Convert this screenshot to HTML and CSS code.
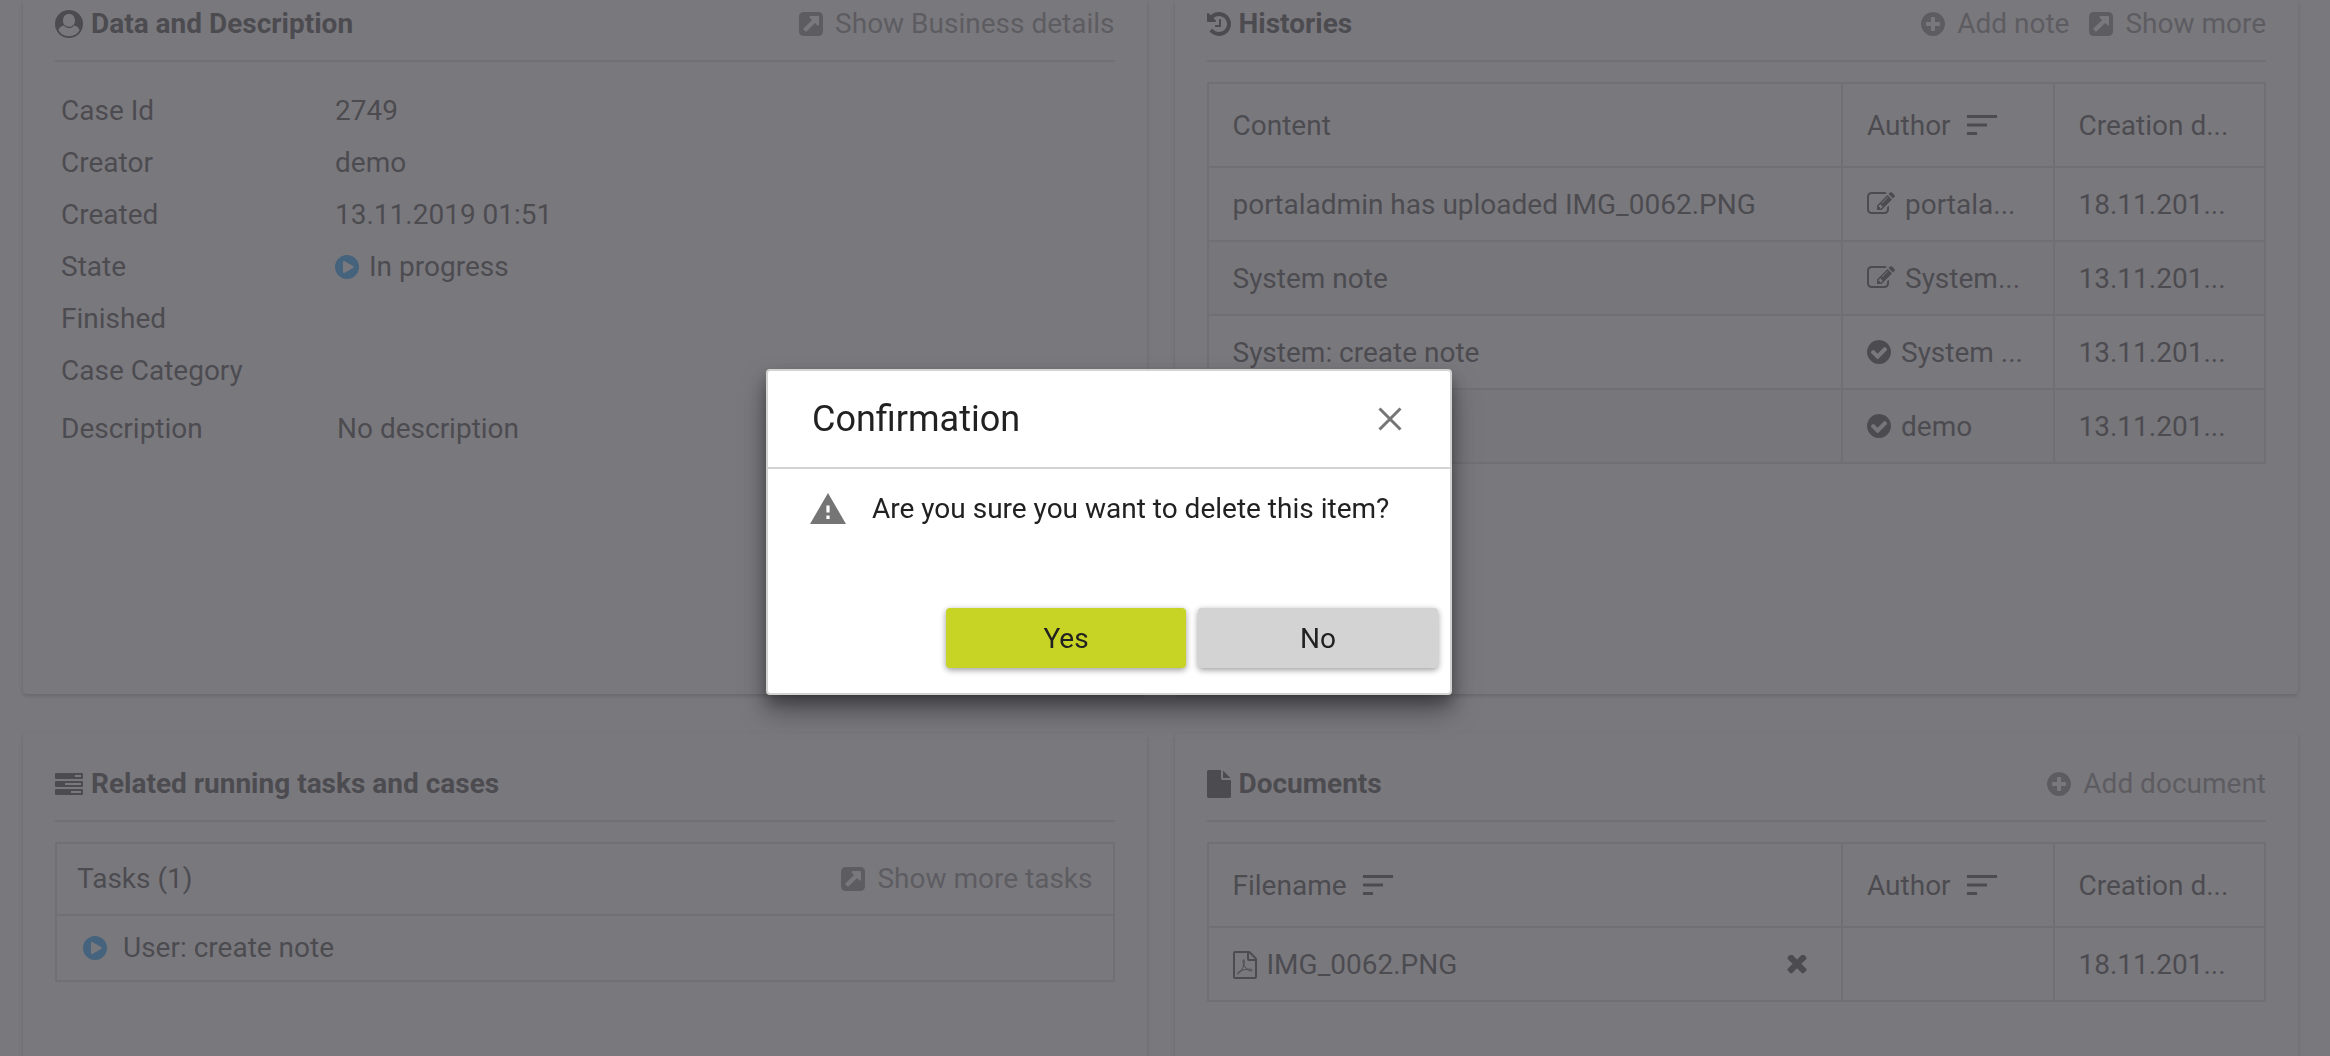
FILE: index.html
```html
<!DOCTYPE html>
<html lang="en">
<head>
<meta charset="utf-8">
<title>Case details</title>
<link rel="stylesheet" href="styles.css">
</head>
<body>
<svg class="sprite" aria-hidden="true">
  <symbol id="i-user" viewBox="0 0 28 28"><path fill-rule="evenodd" d="M14 0a14 14 0 1 0 0 28 14 14 0 0 0 0-28zm0 4c3.400 0 6 2.700 6 6.500 0 2-.700 3.600-1.700 4.800 3.700.5 5.600 2.600 6.200 5A12.300 12.300 0 0 1 14 26.300 12.300 12.300 0 0 1 3.500 20.300c.6-2.400 2.500-4.500 6.200-5C8.700 14.100 8 12.500 8 10.500 8 6.700 10.600 4 14 4z"/><path fill="none" stroke="currentColor" stroke-width="1.300" d="M9.500 15.300c1.200 1.500 2.700 2.200 4.500 2.200s3.300-.7 4.500-2.200"/></symbol>
  <symbol id="i-open" viewBox="128 0 1536 1792"><path d="M1408 928v-480q0-26-19-45t-45-19h-480q-42 0-59 39-17 41 14 70l144 144-534 534q-19 19-19 45t19 45l102 102q19 19 45 19t45-19l534-534 144 144q18 19 45 19 12 0 25-5 39-17 39-59zm256-512v960q0 119-84.500 203.500t-203.500 84.500h-960q-119 0-203.500-84.500t-84.500-203.500v-960q0-119 84.500-203.500t203.500-84.500h960q119 0 203.500 84.500t84.500 203.500z"/></symbol>
  <symbol id="i-plus" viewBox="128 0 1536 1792"><path d="M1344 960v-128q0-26-19-45t-45-19h-256v-256q0-26-19-45t-45-19h-128q-26 0-45 19t-19 45v256h-256q-26 0-45 19t-19 45v128q0 26 19 45t45 19h256v256q0 26 19 45t45 19h128q26 0 45-19t19-45v-256h256q26 0 45-19t19-45zm320-64q0 209-103 385.500t-279.500 279.500-385.500 103-385.500-103-279.500-279.500-103-385.500 103-385.500 279.500-279.500 385.500-103 385.500 103 279.500 279.500 103 385.500z"/></symbol>
  <symbol id="i-check" viewBox="128 0 1536 1792"><path d="M1412 734q0-28-18-46l-91-90q-19-19-45-19t-45 19l-408 407-226-226q-19-19-45-19t-45 19l-91 90q-18 18-18 46 0 27 18 45l362 362q19 19 45 19 27 0 46-19l543-543q18-18 18-45zm252 162q0 209-103 385.500t-279.500 279.500-385.500 103-385.500-103-279.500-279.500-103-385.500 103-385.500 279.500-279.500 385.500-103 385.500 103 279.500 279.500 103 385.500z"/></symbol>
  <symbol id="i-edit" viewBox="0 0 1792 1792"><path d="M888 1184l116-116-152-152-116 116v56h96v96h56zm440-720q-16-16-33 1l-350 350q-17 17-1 33t33-1l350-350q17-17 1-33zm80 594v190q0 119-84.500 203.500t-203.500 84.500h-832q-119 0-203.500-84.500t-84.500-203.500v-832q0-119 84.500-203.500t203.500-84.500h832q63 0 117 25 15 7 18 23 3 17-9 29l-49 49q-14 14-32 8-23-6-45-6h-832q-66 0-113 47t-47 113v832q0 66 47 113t113 47h832q66 0 113-47t47-113v-126q0-13 9-22l64-64q15-15 35-7t20 29zm-96-738l288 288-672 672h-288v-288zm444 132l-92 92-288-288 92-92q28-28 68-28t68 28l152 152q28 28 28 68t-28 68z"/></symbol>
  <symbol id="i-history" viewBox="128 0 1536 1792"><path d="M1664 896q0 156-61 298t-164 245-245 164-298 61q-172 0-327-72.500t-264-204.500q-7-10-6.500-22.500t8.500-20.500l137-138q10-9 25-9 16 2 23 12 73 95 179 147t225 52q104 0 198.500-40.500t163.500-109.500 109.500-163.500 40.500-198.500-40.500-198.500-109.500-163.500-163.500-109.500-198.500-40.500q-98 0-188 35.500t-160 101.500l137 138q31 30 14 69-17 40-59 40h-448q-26 0-45-19t-19-45v-448q0-42 40-59 39-17 69 14l130 129q107-101 244.500-156.500t284.500-55.500q156 0 298 61t245 164 164 245 61 298zm-640-288v448q0 14-9 23t-23 9h-320q-14 0-23-9t-9-23v-64q0-14 9-23t23-9h224v-352q0-14 9-23t23-9h64q14 0 23 9t9 23z"/></symbol>
  <symbol id="i-play" viewBox="0 0 24 28"><path fill-rule="evenodd" d="M12 2a12 12 0 1 0 0 24 12 12 0 0 0 0-24zM8 9.200c0-1 .8-1.500 1.700-1L18 13c.9.500.9 1.400 0 1.900l-8.300 4.900c-.9.500-1.700 0-1.700-1z"/></symbol>
  <symbol id="i-tasks" viewBox="0 0 28 28"><path fill-rule="evenodd" d="M1 3h26q1 0 1 1v4q0 1-1 1H1q-1 0-1-1V4q0-1 1-1zm19 2v2h6V5zM1 11h26q1 0 1 1v4q0 1-1 1H1q-1 0-1-1v-4q0-1 1-1zm9 2v2h16v-2zM1 19h26q1 0 1 1v4q0 1-1 1H1q-1 0-1-1v-4q0-1 1-1zm15 2v2h10v-2z"/></symbol>
  <symbol id="i-file" viewBox="128 0 1536 1792"><path d="M1152 512v-472q22 14 36 28l408 408q14 14 28 36h-472zm-128 32q0 40 28 68t68 28h544v1056q0 40-28 68t-68 28h-1344q-40 0-68-28t-28-68v-1600q0-40 28-68t68-28h800v544z"/></symbol>
  <symbol id="i-pdf" viewBox="0 0 24 28"><g fill="none" stroke="currentColor"><path stroke-width="2" d="M1 2q0-1 1-1h13.500q1 0 1.700.7l5 5q.8.800.8 1.800V26q0 1-1 1H2q-1 0-1-1zM15 1v7q0 1 1 1h7"/><path stroke-width="1" d="M5 23c1.500-.3 4-4.500 5.500-8 1-2.800 1-6 .4-6.400-.9-.4-1.100 2.200-.4 4.400 1 3.300 3.500 6 6.500 6.800 1.400.3 2.600-.3 2-1-1-1.200-5.500-.8-9.500.4-3 1-5.200 2.400-5.100 3.300 0 .4.300.6.600.5z"/></g></symbol>
  <symbol id="i-times" viewBox="302 410 1188 1240"><path d="M1490 1322q0 40-28 68l-136 136q-28 28-68 28t-68-28l-294-294-294 294q-28 28-68 28t-68-28l-136-136q-28-28-28-68t28-68l294-294-294-294q-28-28-28-68t28-68l136-136q28-28 68-28t68 28l294 294 294-294q28-28 68-28t68 28l136 136q28 28 28 68t-28 68l-294 294 294 294q28 28 28 68z"/></symbol>
  <symbol id="i-sort" viewBox="0 0 30 20"><path d="M0 0h30v3H0zM0 8.500h20v3H0zM0 17h10v3H0z"/></symbol>
  <symbol id="i-close" viewBox="0 0 24 24"><path fill="none" stroke="currentColor" stroke-width="3" d="M1.500 1.500l21 21M22.500 1.500l-21 21"/></symbol>
  <symbol id="i-warn" viewBox="0 0 36 31"><path fill-rule="evenodd" d="M18 0L36 31H0zM16.400 12.500v7h3.200v-7zm0 10v3.500h3.200v-3.500z"/></symbol>
</svg>

<main class="dashboard">
  <section class="card card-top">
    <header class="card-header">
      <h2><svg class="icon wide"><use href="#i-user"/></svg>Data and Description</h2>
      <nav class="actions"><a href="#"><svg class="icon"><use href="#i-open"/></svg>Show Business details</a></nav>
    </header>
    <dl class="details">
      <dt>Case Id</dt><dd>2749</dd>
      <dt>Creator</dt><dd>demo</dd>
      <dt>Created</dt><dd>13.11.2019 01:51</dd>
      <dt>State</dt><dd class="state"><svg class="icon running"><use href="#i-play"/></svg>In progress</dd>
      <dt>Finished</dt><dd></dd>
      <dt>Case Category</dt><dd></dd>
      <dt class="description">Description</dt><dd class="description">No description</dd>
    </dl>
  </section>

  <section class="card card-top">
    <header class="card-header">
      <h2><svg class="icon"><use href="#i-history"/></svg>Histories</h2>
      <nav class="actions">
        <a href="#"><svg class="icon"><use href="#i-plus"/></svg>Add note</a>
        <a href="#"><svg class="icon"><use href="#i-open"/></svg>Show more</a>
      </nav>
    </header>
    <table>
      <thead>
        <tr><th class="main-col">Content</th><th>Author<svg class="sort"><use href="#i-sort"/></svg></th><th>Creation d...</th></tr>
      </thead>
      <tbody>
        <tr><td>portaladmin has uploaded IMG_0062.PNG</td><td><svg class="icon wide"><use href="#i-edit"/></svg>portala...</td><td>18.11.201...</td></tr>
        <tr><td>System note</td><td><svg class="icon wide"><use href="#i-edit"/></svg>System...</td><td>13.11.201...</td></tr>
        <tr><td>System: create note</td><td><svg class="icon"><use href="#i-check"/></svg>System ...</td><td>13.11.201...</td></tr>
        <tr><td></td><td><svg class="icon"><use href="#i-check"/></svg>demo</td><td>13.11.201...</td></tr>
      </tbody>
    </table>
  </section>

  <section class="card">
    <header class="card-header">
      <h2><svg class="icon wide"><use href="#i-tasks"/></svg>Related running tasks and cases</h2>
    </header>
    <div class="tasks">
      <div class="tasks-header"><span>Tasks (1)</span><a href="#"><svg class="icon"><use href="#i-open"/></svg>Show more tasks</a></div>
      <div class="task"><svg class="icon running"><use href="#i-play"/></svg>User: create note</div>
    </div>
  </section>

  <section class="card">
    <header class="card-header">
      <h2><svg class="icon"><use href="#i-file"/></svg>Documents</h2>
      <nav class="actions"><a href="#"><svg class="icon"><use href="#i-plus"/></svg>Add document</a></nav>
    </header>
    <table>
      <thead>
        <tr><th class="main-col">Filename<svg class="sort"><use href="#i-sort"/></svg></th><th>Author<svg class="sort"><use href="#i-sort"/></svg></th><th>Creation d...</th></tr>
      </thead>
      <tbody>
        <tr><td><div class="file"><svg class="icon"><use href="#i-pdf"/></svg><span>IMG_0062.PNG</span><button class="remove" type="button" aria-label="Delete document"><svg><use href="#i-times"/></svg></button></div></td><td></td><td>18.11.201...</td></tr>
      </tbody>
    </table>
  </section>
</main>

<div class="overlay">
  <div class="dialog" role="dialog" aria-modal="true" aria-labelledby="dialog-title">
    <header class="dialog-header">
      <h1 id="dialog-title">Confirmation</h1>
      <button class="close" type="button" aria-label="Close"><svg><use href="#i-close"/></svg></button>
    </header>
    <div class="dialog-body"><svg class="warn"><use href="#i-warn"/></svg><p>Are you sure you want to delete this item?</p></div>
    <footer class="dialog-footer">
      <button class="btn primary" type="button">Yes</button>
      <button class="btn" type="button">No</button>
    </footer>
  </div>
</div>
</body>
</html>
```
FILE: styles.css
```css
* { box-sizing: border-box; }

body {
  margin: 0;
  height: 100vh;
  overflow: hidden;
  background: #fff;
  color: #212121;
  font: 28px/32px Roboto, "Liberation Sans", sans-serif;
}

h1, h2, p, dl, dd { margin: 0; }
svg { fill: currentColor; flex: none; }
a { color: #757575; text-decoration: none; }
button { font: inherit; color: inherit; border: 0; padding: 0; background: none; }

.sprite { position: absolute; width: 0; height: 0; }

.icon { width: 24px; height: 28px; }
.icon.wide { width: 28px; }
.running { color: #0095ff; }

/* Dashboard cards */
.dashboard {
  display: grid;
  grid-template-columns: 1fr 1fr;
  grid-template-rows: 694px auto;
  gap: 39px 28px;
  padding: 0 32px 0 23px;
}

.card {
  min-width: 0;
  min-height: 360px;
  padding: 27px 32px;
  border-radius: 4px;
  box-shadow: 0 2px 4px rgba(0, 0, 0, .35);
}
.card-top { padding-top: 0; border-radius: 0 0 4px 4px; }

.card-header {
  display: flex;
  justify-content: space-between;
  align-items: center;
  height: 62px;
  padding-bottom: 12px;
  margin-bottom: 20px;
  border-bottom: 2px solid #d3d3d3;
}
.card-header h2 {
  display: flex;
  align-items: center;
  gap: 8px;
  font-size: 28px;
  font-weight: 700;
}
.card-header a, .tasks-header a {
  display: flex;
  align-items: center;
  gap: 12px;
}
.actions { display: flex; gap: 20px; }

/* Case data */
.details {
  display: grid;
  grid-template-columns: 274px 1fr;
  grid-auto-rows: 32px;
  row-gap: 20px;
  padding: 13px 6px;
}
.state { display: flex; align-items: center; gap: 10px; }
.description { padding-top: 6px; }
dd.description { padding-left: 2px; }

/* Tables */
table {
  width: 100%;
  table-layout: fixed;
  border-collapse: collapse;
}
th, td {
  height: 74px;
  padding: 2px 24px 0;
  border: 2px solid #d3d3d3;
  text-align: left;
  font-weight: 400;
  white-space: nowrap;
  overflow: hidden;
  text-overflow: ellipsis;
}
th { width: 20%; height: 84px; }
.main-col { width: 60%; }
tbody tr:nth-child(even) { background: #f2f2f2; }
td .icon { margin-right: 10px; vertical-align: -4px; }
.sort { width: 30px; height: 20px; margin-left: 16px; }
.file { display: flex; align-items: center; }
.remove { margin-left: auto; margin-right: 10px; height: 20px; }
.remove svg { display: block; width: 20px; height: 20px; }

/* Task list */
.tasks { border: 2px solid #d3d3d3; }
.tasks-header {
  display: flex;
  justify-content: space-between;
  align-items: center;
  height: 70px;
  padding: 0 20px;
}
.task {
  display: flex;
  align-items: center;
  gap: 16px;
  height: 66px;
  padding: 0 26px;
  border-top: 2px solid #d3d3d3;
}

/* Modal */
.overlay {
  position: fixed;
  inset: 0;
  display: flex;
  align-items: center;
  justify-content: center;
  padding-top: 8px;
  background: rgba(88, 86, 92, .8);
}
.dialog {
  width: 686px;
  margin-right: 112px;
  border: 2px solid #d3d3d3;
  border-radius: 4px;
  background: #fff;
  box-shadow: 0 16px 28px rgba(0, 0, 0, .35), 0 8px 14px rgba(0, 0, 0, .25);
}
.dialog-header {
  display: flex;
  justify-content: space-between;
  align-items: center;
  height: 98px;
  padding: 0 48px 0 44px;
  border-bottom: 2px solid #d3d3d3;
}
.dialog-header h1 { font-size: 36px; line-height: 40px; font-weight: 400; }
.close, .close svg { display: block; width: 24px; height: 24px; color: #757575; }
.dialog-body {
  display: flex;
  gap: 26px;
  height: 139px;
  padding: 24px 40px;
}
.warn { width: 36px; height: 31px; margin-left: 2px; color: #757575; }
.dialog-footer {
  display: flex;
  justify-content: flex-end;
  gap: 12px;
  padding: 0 12px 25px;
}
.btn {
  width: 240px;
  height: 60px;
  padding-top: 2px;
  border-radius: 4px;
  background: #d3d3d3;
  box-shadow: 0 2px 6px rgba(0, 0, 0, .4);
}
.primary { background: #c7d426; }
```
